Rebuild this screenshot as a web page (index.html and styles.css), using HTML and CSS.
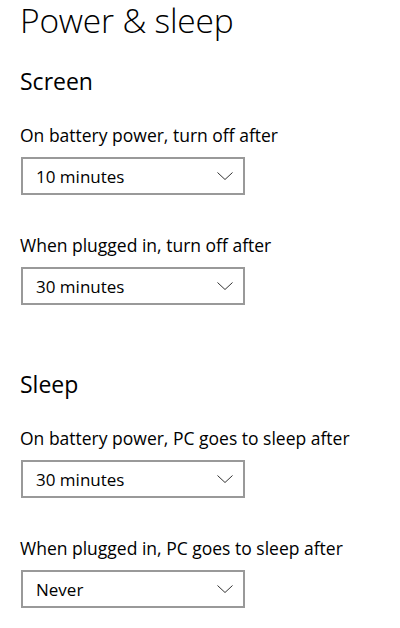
FILE: index.html
```html
<!DOCTYPE html>
<html>
<head>
<meta charset="utf-8">
<link rel="stylesheet" href="styles.css">
</head>
<body>
<div class="page">
  <h1 class="title">Power &amp; sleep</h1>
  <h2 class="section">Screen</h2>
  <div class="field first">
    <div class="label">On battery power, turn off after</div>
    <div class="combo"><span>10 minutes</span><svg class="chev" width="16" height="8" viewBox="0 0 16 8"><path d="M0.5 0.5 L8 7.5 L15.5 0.5" fill="none" stroke="#333" stroke-width="1"/></svg></div>
  </div>
  <div class="field">
    <div class="label">When plugged in, turn off after</div>
    <div class="combo"><span>30 minutes</span><svg class="chev" width="16" height="8" viewBox="0 0 16 8"><path d="M0.5 0.5 L8 7.5 L15.5 0.5" fill="none" stroke="#333" stroke-width="1"/></svg></div>
  </div>
  <h2 class="section sleep">Sleep</h2>
  <div class="field first">
    <div class="label">On battery power, PC goes to sleep after</div>
    <div class="combo"><span>30 minutes</span><svg class="chev" width="16" height="8" viewBox="0 0 16 8"><path d="M0.5 0.5 L8 7.5 L15.5 0.5" fill="none" stroke="#333" stroke-width="1"/></svg></div>
  </div>
  <div class="field">
    <div class="label">When plugged in, PC goes to sleep after</div>
    <div class="combo"><span>Never</span><svg class="chev" width="16" height="8" viewBox="0 0 16 8"><path d="M0.5 0.5 L8 7.5 L15.5 0.5" fill="none" stroke="#333" stroke-width="1"/></svg></div>
  </div>
</div>
</body>
</html>
```
FILE: styles.css
```css
html, body { margin: 0; padding: 0; background: #fff; }
body { font-family: "Open Sans", "Noto Sans", sans-serif; color: #000; }
.page { padding: 0 0 0 20px; display: flex; flex-direction: column; }
.title { margin: -2px 0 0 0; font-size: 33.5px; font-weight: 300; line-height: 45px; letter-spacing: -0.2px; }
.section { margin: 23px 0 0 0; font-size: 23px; font-weight: 400; line-height: 30px; }
.section.sleep { margin-top: 64px; }
.field { margin-top: 39px; display: flex; flex-direction: column; }
.field.first { margin-top: 28px; }
.label { font-size: 17.5px; line-height: 22px; }
.combo { margin: 11px 0 0 1px; height: 34px; border: 2px solid #999; display: flex; align-items: center; justify-content: space-between; padding: 0 10px 0 13px; box-sizing: content-box; width: 197px; font-size: 17px; }
.chev { display: block; }
```
